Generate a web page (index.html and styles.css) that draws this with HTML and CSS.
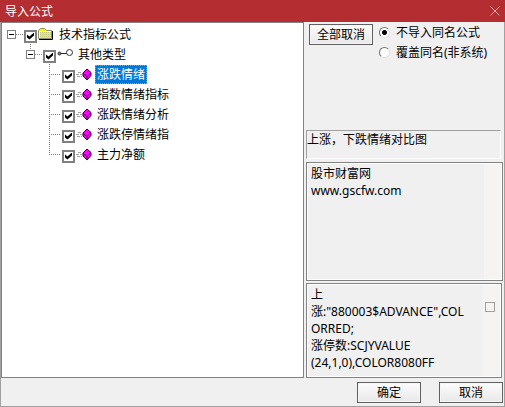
FILE: index.html
```html
<!DOCTYPE html>
<html lang="zh-CN">
<head>
<meta charset="utf-8">
<title>导入公式</title>
<link rel="stylesheet" href="styles.css">
</head>

<body>
<svg class="defs" width="0" height="0" aria-hidden="true">
<symbol id="folder" viewBox="0 0 16 16">
  <path d="M14.500 4v8.500H1" fill="none" stroke="#000"/>
  <path d="M.5 11.500v-8l2-2h4l2 2h5v8z" fill="#f4f400" stroke="#909070"/>
  <path d="M2 5.500h11M2 7.500h11M2 9.500h11" stroke="#c8c880" stroke-dasharray="1 1"/>
  <path d="M1.500 11V4.500H13" fill="none" stroke="#ffffc0"/>
</symbol>
<symbol id="key" viewBox="0 0 16 16">
  <path d="M3 6.500h7" stroke="#222"/>
  <circle cx="2.500" cy="6.500" r="1.500" fill="#888" stroke="#333"/>
  <circle cx="12.500" cy="5.500" r="3" fill="#fff" stroke="#333"/>
</symbol>
<symbol id="formula" viewBox="0 0 16 16">
  <path d="M2 5.500h4M0 7.500h6M1 9.500h5" stroke="#a0a0a0" stroke-dasharray="3 1"/>
  <path d="M11 2l4 3.500v3L11 13 7 9V6z" fill="#ff00ff" stroke="#300030"/>
  <path d="M7 6.500l4 3 4-3.500M11 9.500V13" fill="none" stroke="#600060"/>
</symbol>
</svg>

<form class="dialog">
  <header class="titlebar">
    <h1>导入公式</h1>
    <button type="button" class="close" aria-label="关闭">
      <svg width="10" height="10" viewBox="0 0 10 10"><path d="M.5.5l9 9M9.500.5l-9 9" stroke="#e2a5a7"/></svg>
    </button>
  </header>

  <main class="content">
    <ul class="tree">
      <li>
        <div class="row">
          <button type="button" class="expander" aria-label="折叠"></button>
          <input type="checkbox" id="root" checked>
          <svg class="icon"><use href="#folder"/></svg>
          <label for="root">技术指标公式</label>
        </div>
        <ul>
          <li>
            <div class="row child">
              <button type="button" class="expander" aria-label="折叠"></button>
              <input type="checkbox" id="other" checked>
              <svg class="icon"><use href="#key"/></svg>
              <label for="other">其他类型</label>
            </div>
            <ul>
              <li class="row leaf">
                <input type="checkbox" id="f1" checked>
                <svg class="icon"><use href="#formula"/></svg>
                <label for="f1" class="selected">涨跌情绪</label>
              </li>
              <li class="row leaf">
                <input type="checkbox" id="f2" checked>
                <svg class="icon"><use href="#formula"/></svg>
                <label for="f2">指数情绪指标</label>
              </li>
              <li class="row leaf">
                <input type="checkbox" id="f3" checked>
                <svg class="icon"><use href="#formula"/></svg>
                <label for="f3">涨跌情绪分析</label>
              </li>
              <li class="row leaf">
                <input type="checkbox" id="f4" checked>
                <svg class="icon"><use href="#formula"/></svg>
                <label for="f4">涨跌停情绪指</label>
              </li>
              <li class="row leaf last">
                <input type="checkbox" id="f5" checked>
                <svg class="icon"><use href="#formula"/></svg>
                <label for="f5">主力净额</label>
              </li>
            </ul>
          </li>
        </ul>
      </li>
    </ul>

    <section class="side">
      <div class="options">
        <button type="button" class="btn">全部取消</button>
        <div class="radios">
          <label><input type="radio" name="mode" checked>不导入同名公式</label>
          <label><input type="radio" name="mode">覆盖同名(非系统)</label>
        </div>
      </div>
      <p class="summary">上涨，下跌情绪对比图</p>
      <div class="memo note">
        <textarea readonly aria-label="说明">股市财富网
www.gscfw.com</textarea>
        <div class="track"></div>
      </div>
      <div class="memo source">
        <textarea readonly aria-label="公式源码">上
涨:"880003$ADVANCE",COL
ORRED;
涨停数:SCJYVALUE
(24,1,0),COLOR8080FF</textarea>
        <div class="track"><span class="thumb"></span></div>
      </div>
    </section>
  </main>

  <footer class="buttons">
    <button type="button" class="btn">确定</button>
    <button type="button" class="btn">取消</button>
  </footer>
</form>
</body>
</html>
```

FILE: styles.css
```css
* {
  box-sizing: border-box;
}

body {
  margin: 0;
  font: 12px/17px "Noto Sans", "Noto Sans CJK SC", sans-serif;
  color: #000;
  background: #f0f0f0;
}

button, input, textarea {
  margin: 0;
  font: inherit;
  color: inherit;
}

ul {
  margin: 0;
  padding: 0;
  list-style: none;
}

.defs {
  position: absolute;
}

.dialog {
  display: flex;
  flex-direction: column;
  min-height: 100vh;
  border: 1px solid #a0a0a0;
  border-top: 0;
}

/* title bar */
.titlebar {
  display: flex;
  align-items: center;
  justify-content: space-between;
  height: 22px;
  margin: 0 -1px;
  padding: 0 5px;
  background: #b42d31;
  color: #fff;
}

.titlebar h1 {
  margin: 0;
  font-size: 12px;
  font-weight: normal;
}

.close {
  display: flex;
  padding: 0;
  border: 0;
  background: none;
}

.content {
  display: flex;
  flex: 1;
}

/* tree */
.tree {
  flex: 1;
  padding-top: 1px;
  background: #fff;
  border: 1px solid #828282;
}

.tree ul {
  padding-left: 19px;
}

.row {
  display: flex;
  align-items: center;
  height: 20px;
}

.expander {
  width: 9px;
  height: 9px;
  margin: 0 5px;
  padding: 0;
  border: 1px solid #808080;
  background: linear-gradient(#000, #000) center / 5px 1px no-repeat #fff;
}

.expander + input {
  margin-left: 3px;
}

.row:not(.leaf) {
  background: repeating-linear-gradient(90deg, #808080 0 1px, #fff 1px 2px) 14px 10px / 7px 1px no-repeat;
}

.child {
  position: relative;
}

.child::before {
  content: "";
  position: absolute;
  left: 9px;
  top: 0;
  height: 5px;
  border-left: 1px dotted #808080;
}

.leaf {
  padding-left: 22px;
  background:
    repeating-linear-gradient(#808080 0 1px, #fff 1px 2px) 9px 0 / 1px 20px no-repeat,
    repeating-linear-gradient(90deg, #808080 0 1px, #fff 1px 2px) 9px 10px / 12px 1px no-repeat;
}

.last {
  background-size: 1px 10px, 12px 1px;
}

.row input {
  appearance: none;
  width: 13px;
  height: 13px;
  margin-top: 4px;
  border: 2px solid #808080;
  background: #fff;
}

.row input:checked::before {
  content: "";
  display: block;
  width: 7px;
  height: 7px;
  margin: 1px;
  background: #000;
  clip-path: polygon(0 29%, 35% 58%, 100% 0, 100% 43%, 35% 100%, 0 71%);
}

.icon {
  width: 16px;
  height: 16px;
  margin: 2px 3px 0 1px;
}

.row label {
  padding: 0 1px;
  border: 1px solid transparent;
}

.row .selected {
  background: #0078d7;
  border: 1px dotted #ff8728;
  color: #fff;
}

/* right side */
.side {
  display: flex;
  flex-direction: column;
  width: 200px;
  padding: 0 1px 0 2px;
}

.options {
  display: flex;
  gap: 6px;
  height: 108px;
  padding-left: 3px;
}

.btn {
  width: 64px;
  height: 21px;
  padding: 0;
  border: 1px solid #606060;
  background: linear-gradient(#fcfcfc, #e8e8e8);
  box-shadow: inset 0 0 0 1px #f6f6f6;
  white-space: nowrap;
}

.options .btn {
  margin-top: 2px;
}

.radios label {
  display: flex;
  align-items: center;
  gap: 6px;
  height: 20px;
  white-space: nowrap;
}

.radios input {
  appearance: none;
  width: 11px;
  height: 11px;
  border: 1px solid;
  border-color: #707070 #e0e0e0 #e0e0e0 #707070;
  border-radius: 50%;
  background: #fff;
}

.radios input:checked {
  background: radial-gradient(circle, #000 2px, #fff 3px);
}

.summary {
  height: 29px;
  margin: 0 2px 3px 0;
  border: 1px solid;
  border-color: #a0a0a0 #fff #fff #a0a0a0;
}

.memo {
  display: flex;
  border: 1px solid #828282;
  box-shadow: inset 1px 1px #fff, inset -1px -1px #fff;
}

.memo textarea {
  flex: 1;
  min-width: 0;
  padding: 2px 0 0 4px;
  border: 0;
  background: none;
  resize: none;
  overflow: hidden;
  white-space: pre;
}

.track {
  width: 17px;
  margin: 1px;
  background: #f5f4f2;
}

.note {
  flex: 1;
  margin-bottom: 2px;
}

.source {
  height: 95px;
  margin-right: 1px;
}

.thumb {
  display: block;
  width: 10px;
  height: 10px;
  margin: 17px 0 0 2px;
  border: 1px solid #a0a0a0;
}

.buttons {
  display: flex;
  justify-content: flex-end;
  gap: 18px;
  padding: 4px 1px 3px;
}
```
